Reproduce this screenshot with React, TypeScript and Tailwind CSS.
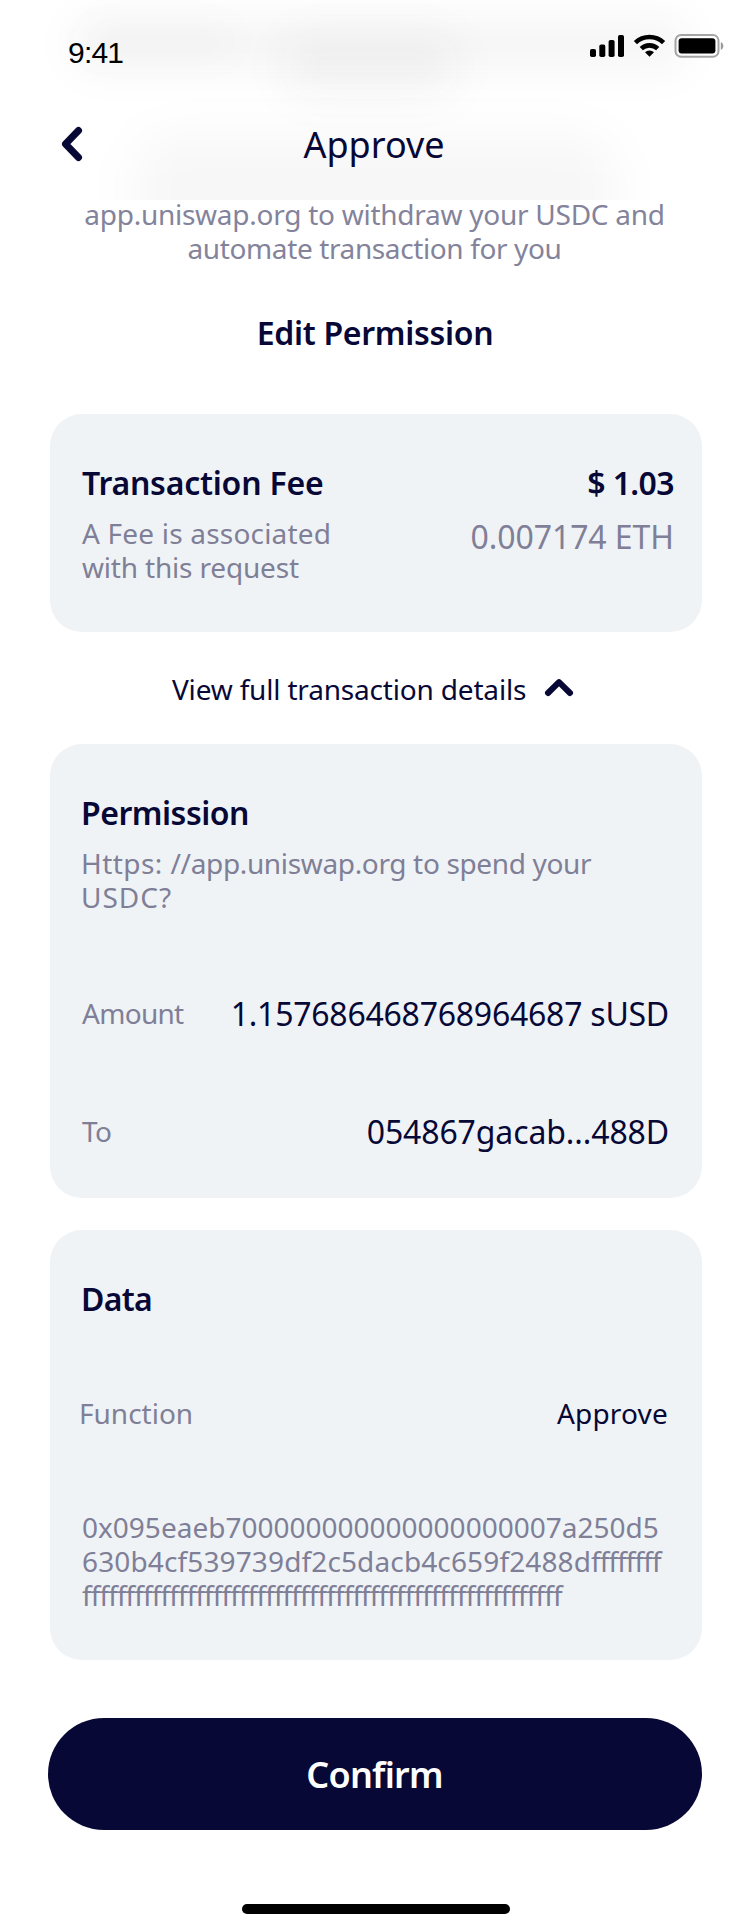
import type { ReactNode } from "react";

const F_RUN_SHORT = "f".repeat(8);
const F_RUN_LONG = "f".repeat(55);

function StatusIcons() {
  return (
    <svg width="134" height="24" viewBox="590 34 134 24" fill="none" aria-hidden="true">
      <g fill="#000">
        <rect x="590" y="49" width="6" height="8" rx="1.8" />
        <rect x="599.3" y="44.6" width="6" height="12.4" rx="1.8" />
        <rect x="608.6" y="40" width="6" height="17" rx="1.8" />
        <rect x="618" y="35" width="6" height="22" rx="1.8" />
      </g>
      <g stroke="#000" strokeWidth="4.6">
        <path d="M635.400 42.700A20.400 20.400 0 0 1 663.600 42.700" />
        <path d="M641.300 48.600A12 12 0 0 1 657.700 48.600" />
      </g>
      <path d="M645 52.2a6.6 6.6 0 0 1 9 0l-4.500 4.600z" fill="#000" />
      <rect x="675.5" y="35" width="43" height="21.8" rx="5.6" stroke="#000" strokeOpacity="0.35" strokeWidth="2" />
      <rect x="678.6" y="38.3" width="36.8" height="15.2" rx="3" fill="#000" />
      <path d="M720.800 42v8c1.600-.7 2.500-2.200 2.500-4s-.9-3.300-2.500-4z" fill="#000" fillOpacity="0.4" />
    </svg>
  );
}

function Header() {
  return (
    <header className="relative h-[200px] overflow-hidden">
      {/* Frosted traces of the content scrolled beneath the bar */}
      <div className="absolute inset-0" aria-hidden="true">
        <div className="absolute left-[70px] top-[16px] h-[56px] w-[620px] rounded-full bg-[#101020]/4 blur-[18px]" />
        <div className="absolute left-[85px] top-[24px] h-[34px] w-[150px] rounded-full bg-[#101020]/2 blur-[18px]" />
        <div className="absolute left-[280px] top-[34px] h-[64px] w-[180px] rounded-full bg-[#101020]/4 blur-[20px]" />
        <div className="absolute left-[135px] top-[134px] h-[140px] w-[480px] rounded-[40px] bg-black/3 blur-[24px]" />
      </div>
      <div className="relative flex h-[92px] items-start justify-between pl-[68px] pr-[26px] pt-[34px]">
        <span className="mt-px font-['Liberation_Sans',sans-serif] text-[30px] leading-[36px] tracking-[-0.8px] text-black">9:41</span>
        <StatusIcons />
      </div>
      <div className="relative flex justify-center pt-[31px]">
        <svg className="absolute left-[59px] top-[32px]" width="26" height="40" viewBox="0 0 26 40" fill="none" stroke="#080836" strokeWidth="7" strokeLinecap="round" strokeLinejoin="round">
          <path d="M19.500 6.500L6.500 20L19.500 33.500" />
        </svg>
        <h1 className="pr-[2px] text-[36px] leading-[44px]">Approve</h1>
      </div>
    </header>
  );
}

function Card({ className, children }: { className: string; children: ReactNode }) {
  return <section className={`ml-[50px] w-[652px] rounded-[32px] bg-[#eff3f6] pl-8 ${className}`}>{children}</section>;
}

export default function App() {
  return (
    <main className="flex h-[1930px] w-[750px] flex-col bg-white font-['Noto_Sans',sans-serif] text-[#080836]">
      <Header />
      <p className="-mt-[3px] pr-px text-center text-[28px] leading-[34px] text-[#83839b]">
        <span className="tracking-[-0.26px]">app.uniswap.org to withdraw your USDC and</span>
        <br />
        <span className="tracking-[-0.38px]">automate transaction for you</span>
      </p>
      <h2 className="mt-12 text-center text-[32px] font-semibold leading-10 tracking-[-0.3px]">Edit Permission</h2>

      <Card className="mt-[61px] h-[218px] pr-7 pt-[49px]">
        <div className="flex justify-between text-[32px] font-semibold leading-10">
          <h3 className="tracking-[-0.22px]">Transaction Fee</h3>
          <span className="tracking-[-0.6px]">$ 1.03</span>
        </div>
        <div className="mt-[13px] flex items-start justify-between text-[#7f7f97]">
          <p className="text-[28px] leading-[34px]">
            <span className="tracking-[0.2px]">A Fee is associated</span>
            <br />
            <span className="tracking-[-0.18px]">with this request</span>
          </p>
          <span className="mt-px text-[32px] leading-10 tracking-[-0.06px]">0.007174 ETH</span>
        </div>
      </Card>

      <button className="ml-[172px] mt-10 flex h-[34px] items-center gap-[17px] self-start text-[28px] leading-[34px] tracking-[-0.18px]">
        View full transaction details
        <svg width="32" height="24" viewBox="0 0 32 24" fill="none" stroke="#080836" strokeWidth="6" strokeLinecap="round" strokeLinejoin="round">
          <path d="M5 16L16 5.200L27 16" />
        </svg>
      </button>

      <Card className="mt-[38px] h-[454px] pr-[33px] pt-[49px]">
        <h3 className="-ml-px text-[32px] font-semibold leading-10 tracking-[-0.49px]">Permission</h3>
        <p className="-ml-px mt-[13px] text-[28px] leading-[34px] text-[#7f7f97]">
          <span className="tracking-[0.45px]">Https: </span>
          <span className="tracking-[-0.35px]">//app.uniswap.org to spend your</span>
          <br />
          <span className="tracking-[1px]">USDC?</span>
        </p>
        <div className="mt-20 flex items-start justify-between">
          <span className="mt-0.5 text-[28px] leading-[34px] tracking-[-0.7px] text-[#7f7f97]">Amount</span>
          <span className="text-[32px] leading-10 tracking-[-0.24px]">1.157686468768964687 sUSD</span>
        </div>
        <div className="mt-[78px] flex items-start justify-between">
          <span className="mt-0.5 text-[28px] leading-[34px] tracking-[-0.6px] text-[#7f7f97]">To</span>
          <span className="text-[32px] leading-10 tracking-[-0.12px]">054867gacab...488D</span>
        </div>
      </Card>

      <Card className="mt-8 h-[430px] pr-[34px] pt-[49px]">
        <h3 className="-ml-px text-[32px] font-semibold leading-10 tracking-[-0.7px]">Data</h3>
        <div className="-ml-[3px] mt-[77px] flex justify-between text-[28px] leading-[34px]">
          <span className="text-[#7f7f97]">Function</span>
          <span className="tracking-[0.18px]">Approve</span>
        </div>
        <p className="mt-20 whitespace-nowrap text-[28px] leading-[34px] text-[#7f7f97]">
          {`0x095eaeb7${"0".repeat(19)}7a250d5`}
          <br />
          <span className="tracking-[0.13px]">630b4cf539739df2c5dacb4c659f2488d</span>
          <span className="tracking-[-0.94px]">{F_RUN_SHORT}</span>
          <br />
          <span className="tracking-[-0.91px]">{F_RUN_LONG}</span>
        </p>
      </Card>

      <button className="ml-12 mt-[58px] flex h-28 w-[654px] items-center justify-center rounded-full bg-[#080836] pr-px pt-0.5 text-[36px] font-semibold leading-[44px] tracking-[-0.8px] text-white">
        Confirm
      </button>
      <div className="ml-[242px] mt-[74px] h-2.5 w-[268px] rounded-full bg-black" />
    </main>
  );
}
